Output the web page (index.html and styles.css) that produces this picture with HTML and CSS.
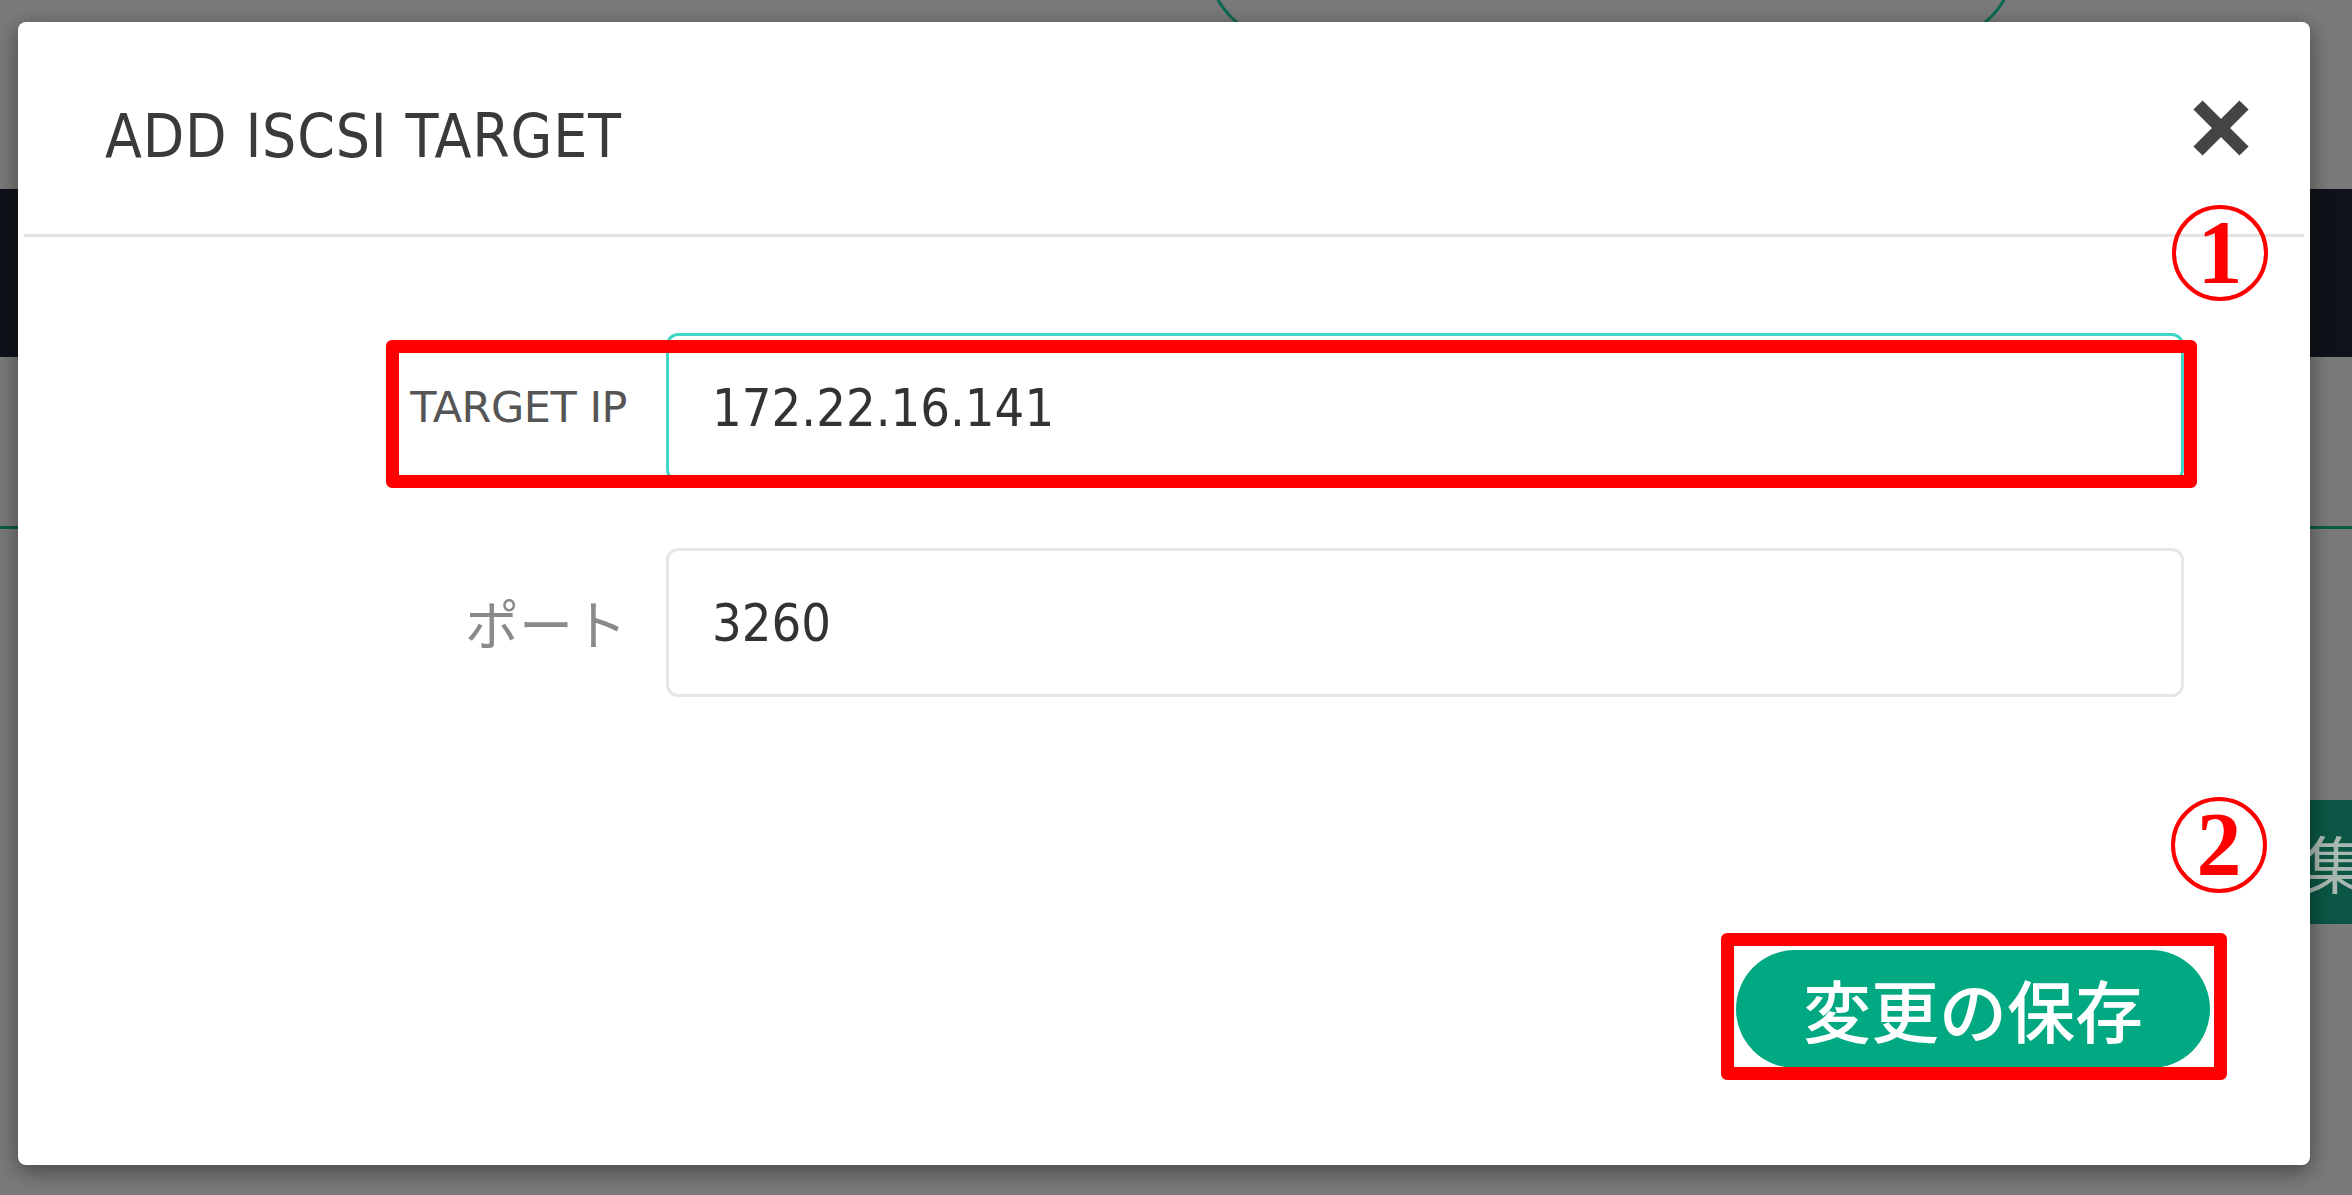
FILE: index.html
```html
<!DOCTYPE html>
<html lang="ja">
<head>
  <meta charset="UTF-8">
  <meta name="viewport" content="width=device-width, initial-scale=1.0">
  <title>Add iSCSI Target</title>
  <link rel="stylesheet" href="styles.css">
</head>
<body>
  <div class="backdrop">
    <div class="bg-pill"></div>
    <div class="bg-nav"></div>
    <div class="bg-line"></div>
    <div class="bg-tile">集</div>
  </div>

  <div class="modal">
    <div class="modal-header">
      <h2 class="modal-title">ADD ISCSI TARGET</h2>
      <button class="close-btn" aria-label="close">
        <svg width="62" height="58" viewBox="0 0 62 58">
          <path d="M8 6 L54 52 M54 6 L8 52" stroke="#444" stroke-width="13" fill="none"/>
        </svg>
      </button>
    </div>

    <div class="modal-body">
      <div class="form-row">
        <label class="field-label">TARGET IP</label>
        <input class="field-input focused" type="text" value="172.22.16.141">
      </div>
      <div class="form-row">
        <label class="field-label label-ja">ポート</label>
        <input class="field-input" type="text" value="3260">
      </div>
    </div>

    <div class="modal-footer">
      <button class="save-btn">変更の保存</button>
    </div>

    <!-- annotations -->
    <div class="mark mark-box box-1"></div>
    <div class="mark mark-num num-1">1</div>
    <div class="mark mark-box box-2"></div>
    <div class="mark mark-num num-2">2</div>
  </div>
</body>
</html>
```

FILE: styles.css
```css
* {
  box-sizing: border-box;
}
body {
  margin: 0;
  padding: 22px 0 0 18px;
  height: 1195px;
  overflow: hidden;
  background: #7a7a7a;
  font-family: "DejaVu Sans Condensed", "DejaVu Sans", "Liberation Sans", sans-serif;
  font-stretch: condensed;
  position: relative;
}

/* dimmed page behind the dialog */
.backdrop {
  position: absolute;
  inset: 0;
}
.bg-pill {
  position: absolute;
  left: 1208px;
  top: -110px;
  width: 806px;
  height: 150px;
  border: 3px solid #0d6a52;
  border-radius: 120px;
}
.bg-nav {
  position: absolute;
  left: 0;
  right: 0;
  top: 189px;
  height: 168px;
  background: #0f1319;
}
.bg-line {
  position: absolute;
  left: 0;
  right: 0;
  top: 526px;
  height: 3px;
  background: #0b5c47;
}
.bg-tile {
  position: absolute;
  left: 2296px;
  top: 800px;
  width: 80px;
  height: 124px;
  background: #0b5644;
  color: #a9b8b0;
  font-family: "Noto Sans CJK JP", sans-serif;
  font-size: 62px;
  line-height: 124px;
  padding-left: 8px;
}

.modal {
  position: relative;
  z-index: 1;
  width: 2292px;
  height: 1143px;
  background: #fff;
  border-radius: 8px;
  box-shadow: 0 6px 22px rgba(0, 0, 0, 0.45);
}
.modal-header {
  display: flex;
  justify-content: space-between;
  align-items: center;
  height: 215px;
  margin: 0 6px;
  padding: 0 52px 0 81px;
  border-bottom: 3px solid #e3e3e3;
}
.modal-title {
  margin: 16px 0 0 0;
  font-size: 60px;
  font-weight: normal;
  line-height: 1;
  color: #3a3a3a;
  letter-spacing: 0.8px;
}
.close-btn {
  background: none;
  border: none;
  padding: 0;
  cursor: pointer;
  display: flex;
}

.modal-body {
  padding-top: 96px;
}
.form-row {
  display: grid;
  grid-template-columns: 609px 1fr;
  column-gap: 39px;
  align-items: center;
  padding-right: 126px;
  margin-bottom: 66px;
}
.form-row:last-child {
  margin-bottom: 0;
}
.field-label {
  text-align: right;
  font-size: 43px;
  font-stretch: normal;
  font-family: "DejaVu Sans", sans-serif;
  color: #555;
  line-height: 1;
  letter-spacing: -0.5px;
}
.label-ja {
  font-family: "Noto Sans CJK JP", sans-serif;
  font-size: 54px;
  color: #8a8a8a;
  letter-spacing: 0;
}
.field-input {
  height: 149px;
  width: 100%;
  border: 3px solid #e4e6ea;
  border-radius: 12px;
  padding: 0 43px;
  font-family: inherit;
  font-stretch: condensed;
  font-size: 52px;
  color: #333;
  background: #fff;
  outline: none;
}
.field-input.focused {
  border-color: #3fd6c6;
}

.modal-footer {
  display: flex;
  justify-content: flex-end;
  padding-right: 100px;
  margin-top: 253px;
}
.save-btn {
  width: 474px;
  height: 118px;
  border: none;
  border-radius: 59px;
  background: #01a982;
  color: #fff;
  font-family: "Noto Sans CJK JP", sans-serif;
  font-size: 68px;
  font-weight: 500;
  line-height: 1;
  cursor: pointer;
}

/* red markers drawn over the screenshot */
.mark {
  position: absolute;
}
.mark-box {
  border: 13px solid #ff0000;
  border-radius: 6px;
}
.box-1 {
  left: 368px;
  top: 318px;
  width: 1811px;
  height: 148px;
}
.box-2 {
  left: 1703px;
  top: 911px;
  width: 506px;
  height: 147px;
}
.mark-num {
  width: 96px;
  height: 96px;
  border: 4px solid #ff0000;
  border-radius: 50%;
  color: #ff0000;
  font-family: "Liberation Serif", serif;
  font-weight: bold;
  font-size: 90px;
  line-height: 88px;
  text-align: center;
}
.num-1 {
  left: 2154px;
  top: 183px;
}
.num-2 {
  left: 2153px;
  top: 775px;
}
```
